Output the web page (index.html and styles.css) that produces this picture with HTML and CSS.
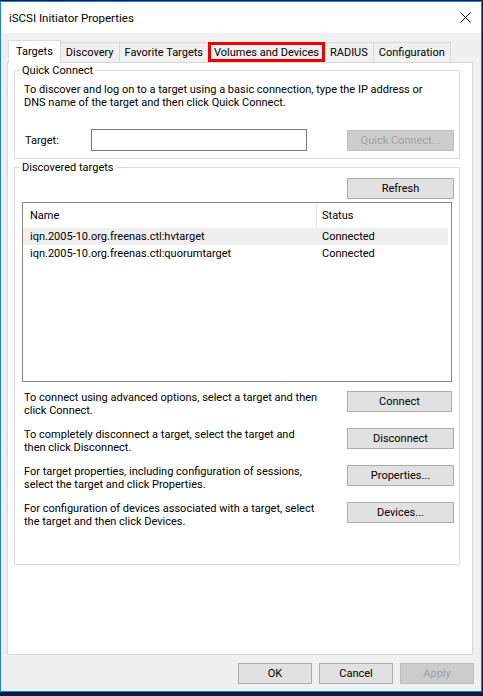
FILE: index.html
```html
<!DOCTYPE html>
<html>
<head>
<meta charset="utf-8">
<title>iSCSI Initiator Properties</title>
<link rel="stylesheet" href="styles.css">
</head>
<body>
<div class="window">
  <div class="titlebar">
    <span class="title">iSCSI Initiator Properties</span>
    <span class="close"><svg width="11" height="11" viewBox="0 0 11 11"><path d="M0.5 0.5L10.5 10.5M10.5 0.5L0.5 10.5" stroke="#000" stroke-width="1" fill="none"/></svg></span>
  </div>
  <div class="client">
    <div class="tabs">
      <div class="tab active">Targets</div>
      <div class="tab">Discovery</div>
      <div class="tab">Favorite Targets</div>
      <div class="tab marked">Volumes and Devices</div>
      <div class="tab">RADIUS</div>
      <div class="tab">Configuration</div>
    </div>
    <div class="panel">
      <fieldset class="group quick">
        <legend>Quick Connect</legend>
        <p class="desc">To discover and log on to a target using a basic connection, type the IP address or<br>DNS name of the target and then click Quick Connect.</p>
        <div class="target-row">
          <span class="label">Target:</span>
          <div class="input"></div>
          <button class="btn wide disabled">Quick Connect...</button>
        </div>
      </fieldset>
      <fieldset class="group discovered">
        <legend>Discovered targets</legend>
        <div class="refresh-row"><button class="btn wide">Refresh</button></div>
        <div class="list">
          <div class="list-head">
            <div class="col name">Name</div>
            <div class="col status">Status</div>
          </div>
          <div class="list-row hl">
            <div class="col name">iqn.2005-10.org.freenas.ctl:hvtarget</div>
            <div class="col status">Connected</div>
          </div>
          <div class="list-row">
            <div class="col name">iqn.2005-10.org.freenas.ctl:quorumtarget</div>
            <div class="col status">Connected</div>
          </div>
        </div>
        <div class="actions">
          <div class="action">
            <p>To connect using advanced options, select a target and then<br>click Connect.</p>
            <button class="btn wide narrow">Connect</button>
          </div>
          <div class="action">
            <p>To completely disconnect a target, select the target and<br>then click Disconnect.</p>
            <button class="btn wide">Disconnect</button>
          </div>
          <div class="action">
            <p>For target properties, including configuration of sessions,<br>select the target and click Properties.</p>
            <button class="btn wide">Properties...</button>
          </div>
          <div class="action">
            <p>For configuration of devices associated with a target, select<br>the target and then click Devices.</p>
            <button class="btn wide">Devices...</button>
          </div>
        </div>
      </fieldset>
    </div>
    <div class="footer">
      <button class="btn">OK</button>
      <button class="btn">Cancel</button>
      <button class="btn disabled">Apply</button>
    </div>
  </div>
</div>
</body>
</html>
```

FILE: styles.css
```css
* { box-sizing: border-box; }
html, body { margin: 0; padding: 0; }
body {
  background: #0b1f3a;
  width: 483px;
  height: 696px;
  overflow: hidden;
  font-family: Roboto, "Segoe UI", sans-serif;
  font-size: 11px;
  color: #000;
}
.window {
  margin-top: 1px;
  width: 482px;
  height: 691px;
  border: 1px solid #1883d7;
  background: #f0f0f0;
  display: flex;
  flex-direction: column;
}
.titlebar {
  flex: none;
  height: 31px;
  background: #fff;
  display: flex;
  align-items: center;
  justify-content: space-between;
  padding: 0 10px 0 8px;
}
.title { font-size: 11.5px; }
.close svg { display: block; }
.client {
  flex: 1;
  min-height: 0;
  display: flex;
  flex-direction: column;
  padding: 7px 7px 7px 6px;
}
.tabs {
  flex: none;
  height: 22px;
  display: flex;
  align-items: flex-end;
  padding-left: 1px;
}
.tab {
  height: 20px;
  line-height: 19px;
  padding: 0 5px;
  border: 1px solid #d9d9d9;
  border-bottom: none;
  background: #f0f0f0;
  margin-left: -1px;
  white-space: nowrap;
}
.tab:first-child { margin-left: 0; }
.tab.active {
  height: 23px;
  line-height: 21px;
  padding: 0 7px;
  margin-bottom: -1px;
  background: #fff;
  position: relative;
  z-index: 1;
}
.tab.marked {
  outline: 3px solid #ee0000;
  outline-offset: -3px;
  position: relative;
  z-index: 2;
}
.panel {
  flex: 1;
  min-height: 0;
  background: #fff;
  border: 1px solid #d9d9d9;
  margin-right: 1px;
  padding: 0 12px 0 6px;
}
.group {
  margin: 0;
  min-width: 0;
  border: 1px solid #dcdcdc;
  padding: 0 5px 0 9px;
}
.group legend {
  padding: 0 2px;
  margin-left: -4px;
  height: 14px;
  line-height: 16px;
}
.quick { padding-bottom: 7px; }
.desc { margin: 6px 0 0; line-height: 13px; white-space: nowrap; }
.target-row {
  display: flex;
  align-items: center;
  height: 22px;
  margin-top: 20px;
}
.label { width: 67px; padding-left: 1px; }
.input {
  width: 216px;
  height: 22px;
  border: 1px solid #7a7a7a;
  background: #fff;
}
.target-row .btn { margin-left: auto; }
.btn {
  height: 21px;
  width: 74px;
  padding: 0;
  border: 1px solid #adadad;
  background: #e1e1e1;
  color: #000;
  font: inherit;
  line-height: 19px;
}
.btn.wide { width: 107px; }
.btn.narrow { width: 105px; margin-right: 2px; }
.btn.disabled {
  background: #cccccc;
  border-color: #bfbfbf;
  color: #a0a0a0;
}
.discovered { margin-top: 1px; padding-bottom: 36px; }
.refresh-row { display: flex; justify-content: flex-end; margin-top: 4px; }
.list {
  margin: 3px 0 0 -2px;
  width: 430px;
  height: 180px;
  border: 1px solid #828790;
  background: #fff;
}
.list-head, .list-row { display: flex; }
.list-head { height: 25px; line-height: 25px; }
.list-row { height: 17px; line-height: 17px; width: 425px; }
.list-row.hl { background: #efefef; }
.col { white-space: nowrap; }
.col.name { width: 293px; padding-left: 7px; }
.col.status { padding-left: 5px; flex: 1; }
.list-head .col.status { border-left: 1px solid #e5e5e5; }
.list-row .col.status { padding-left: 6px; }
.actions {
  margin-top: 9px;
  display: flex;
  flex-direction: column;
  gap: 11px;
}
.action {
  height: 26px;
  display: flex;
  justify-content: space-between;
  align-items: flex-start;
}
.action p { margin: 0; line-height: 13px; white-space: nowrap; }
.footer {
  flex: none;
  margin-top: 8px;
  display: flex;
  justify-content: flex-end;
  gap: 7px;
}
```
